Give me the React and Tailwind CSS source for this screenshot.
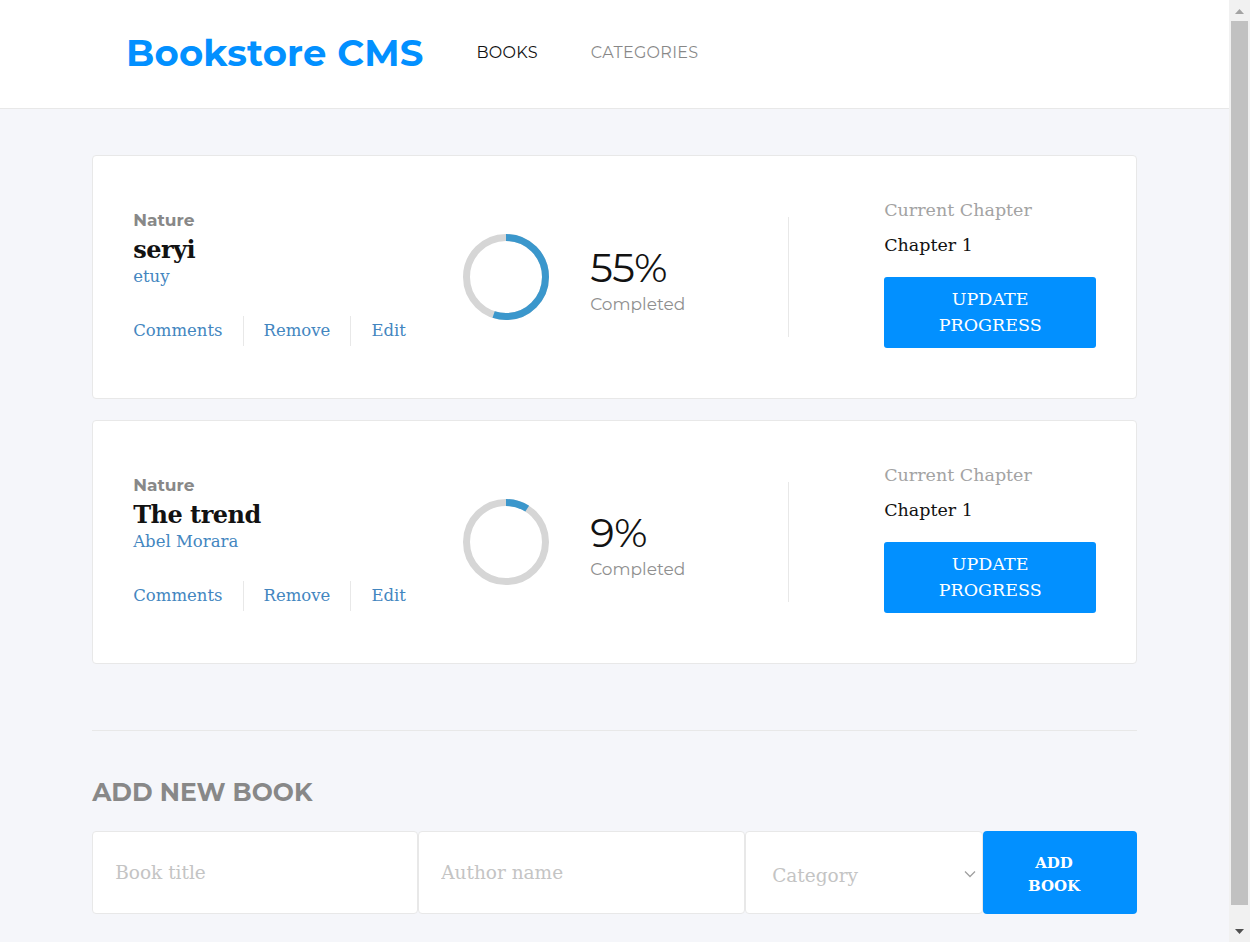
import { useState } from 'react';

const books = [
  { id: 1, category: 'Nature', title: 'seryi', author: 'etuy', progress: 55, chapter: 'Chapter 1' },
  { id: 2, category: 'Nature', title: 'The trend', author: 'Abel Morara', progress: 9, chapter: 'Chapter 1' },
];

const sans = "font-['Montserrat','DejaVu_Sans',sans-serif]";
const slab = "font-['Roboto_Slab','DejaVu_Serif',serif]";

function Ring({ value }) {
  const r = 39.5;
  const c = 2 * Math.PI * r;
  return (
    <svg width="86" height="86" viewBox="0 0 86 86" className="shrink-0">
      <circle cx="43" cy="43" r={r} fill="none" stroke="#d6d6d6" strokeWidth="7" />
      <circle
        cx="43"
        cy="43"
        r={r}
        fill="none"
        stroke="#3b97cc"
        strokeWidth="7"
        strokeDasharray={`${(c * value) / 100} ${c}`}
        transform="rotate(-90 43 43)"
      />
    </svg>
  );
}

function BookCard({ book }) {
  return (
    <div className="flex items-center h-[244px] bg-white border border-[#e8e8e8] rounded-[4px] pl-[41px]">
      {/* Book info */}
      <div className="w-[330px] shrink-0 self-start mt-[54px] -ml-px">
        <p className={`${sans} text-[17px] font-bold text-[#888888] leading-[20px]`}>{book.category}</p>
        <h2 className={`${slab} mt-[5px] text-[24px] font-bold text-[#121212] leading-[30px] tracking-[-0.5px]`}>{book.title}</h2>
        <p className={`${slab} mt-[2px] text-[16.5px] font-light text-[#4386bf] leading-[20px]`}>{book.author}</p>
        <div className={`${slab} flex items-center mt-[29px] text-[16.5px] font-light text-[#4386bf]`}>
          <button className="pr-[20px] leading-[30px]">Comments</button>
          <span className="w-px h-[30px] bg-[#e8e8e8]" />
          <button className="px-[20px] leading-[30px]">Remove</button>
          <span className="w-px h-[30px] bg-[#e8e8e8]" />
          <button className="pl-[20px] leading-[30px]">Edit</button>
        </div>
      </div>

      {/* Progress */}
      <div className="w-[325px] shrink-0 flex items-center">
        <Ring value={book.progress} />
        <div className="ml-[41px] mt-[5px]">
          <p className={`${sans} text-[40px] text-[#121212] leading-[44px] tracking-[-0.3px]`}>{book.progress}%</p>
          <p className={`${sans} mt-[4px] text-[17px] text-[#8f8f8f] leading-[20px]`}>Completed</p>
        </div>
      </div>

      <span className="w-px h-[120px] bg-[#e8e8e8]" />

      {/* Chapter */}
      <div className="ml-[95px] w-[212px] -mt-[8px]">
        <p className={`${slab} text-[17.5px] font-light text-[#a3a3a3] leading-[24px] -translate-y-px`}>Current Chapter</p>
        <p className={`${slab} text-[17.5px] font-light text-[#121212] leading-[24px] mt-[10px]`}>{book.chapter}</p>
        <button className={`${slab} mt-[20px] w-[212px] h-[71px] rounded-[3px] bg-[#0290ff] text-white text-[17.5px] font-light leading-[26px] px-[50px]`}>
          UPDATE PROGRESS
        </button>
      </div>
    </div>
  );
}

function Scrollbar() {
  return (
    <aside className="sticky top-0 w-[21px] h-screen shrink-0 bg-[#f1f1f1] flex flex-col items-center">
      <div className="h-[21px] pt-[9px]">
        <svg width="9" height="5" viewBox="0 0 9 5">
          <path d="M4.5 0L9 5H0z" fill="#a3a3a3" />
        </svg>
      </div>
      <div className="w-[17px] h-[884px] bg-[#c1c1c1]" />
      <div className="mt-[24px]">
        <svg width="9" height="5" viewBox="0 0 9 5">
          <path d="M0 0h9L4.5 5z" fill="#505050" />
        </svg>
      </div>
    </aside>
  );
}

export default function App() {
  const [title, setTitle] = useState('');
  const [author, setAuthor] = useState('');
  const [category, setCategory] = useState('');

  return (
    <div className="flex min-h-screen bg-[#f5f6fa]">
      <div className="w-[1229px] shrink-0 pb-[27px]">
        <header className="h-[109px] bg-white border-b border-[#e8e8e8] flex items-center pl-[126px] pb-[3px]">
          <h1 className={`${sans} text-[37px] font-bold text-[#0290ff] tracking-[0.2px]`}>Bookstore CMS</h1>
          <nav className={`${sans} flex items-center ml-[53px] gap-[53px] text-[16px] tracking-[0.3px]`}>
            <a className="text-[#121212]">BOOKS</a>
            <a className="text-[#121212] opacity-50">CATEGORIES</a>
          </nav>
        </header>

        <main className="w-[85%] mx-auto pt-[46px]">
          <div className="flex flex-col gap-[21px]">
            {books.map((b) => (
              <BookCard key={b.id} book={b} />
            ))}
          </div>

          <div className="mt-[66px] border-t border-[#e8e8e8] pt-[46px]">
            <h3 className={`${sans} text-[25px] font-bold text-[#888888] leading-[30px]`}>ADD NEW BOOK</h3>
            <form className="flex mt-[24px] h-[83px]" onSubmit={(e) => e.preventDefault()}>
              <input
                value={title}
                onChange={(e) => setTitle(e.target.value)}
                placeholder="Book title"
                className={`${slab} w-[326px] h-full bg-white border border-[#e8e8e8] rounded-[4px] px-[22px] text-[18.5px] placeholder:text-[#c4c4c4] outline-none`}
              />
              <input
                value={author}
                onChange={(e) => setAuthor(e.target.value)}
                placeholder="Author name"
                className={`${slab} w-[327px] h-full bg-white border border-[#e8e8e8] rounded-[4px] px-[22px] text-[18.5px] placeholder:text-[#c4c4c4] outline-none`}
              />
              <div className="relative w-[238px] h-full">
                <select
                  value={category}
                  onChange={(e) => setCategory(e.target.value)}
                  className={`${slab} appearance-none w-full h-full bg-white border border-[#e8e8e8] rounded-[4px] pl-[26px] pt-[6px] text-[18.5px] text-[#c4c4c4] outline-none`}
                >
                  <option value="">Category</option>
                  <option value="Nature">Nature</option>
                  <option value="Action">Action</option>
                </select>
                <svg className="absolute right-[7px] top-[39px] pointer-events-none" width="12" height="8" viewBox="0 0 12 8">
                  <path d="M1 1.5l5 5 5-5" fill="none" stroke="#a0a0a0" strokeWidth="1.3" />
                </svg>
              </div>
              <button className={`${slab} flex-1 h-full rounded-[4px] bg-[#0290ff] text-white text-[15px] font-bold leading-[23px] pl-[28px] pr-[40px] pt-[4px]`}>
                ADD BOOK
              </button>
            </form>
          </div>
        </main>
      </div>
      <Scrollbar />
    </div>
  );
}
